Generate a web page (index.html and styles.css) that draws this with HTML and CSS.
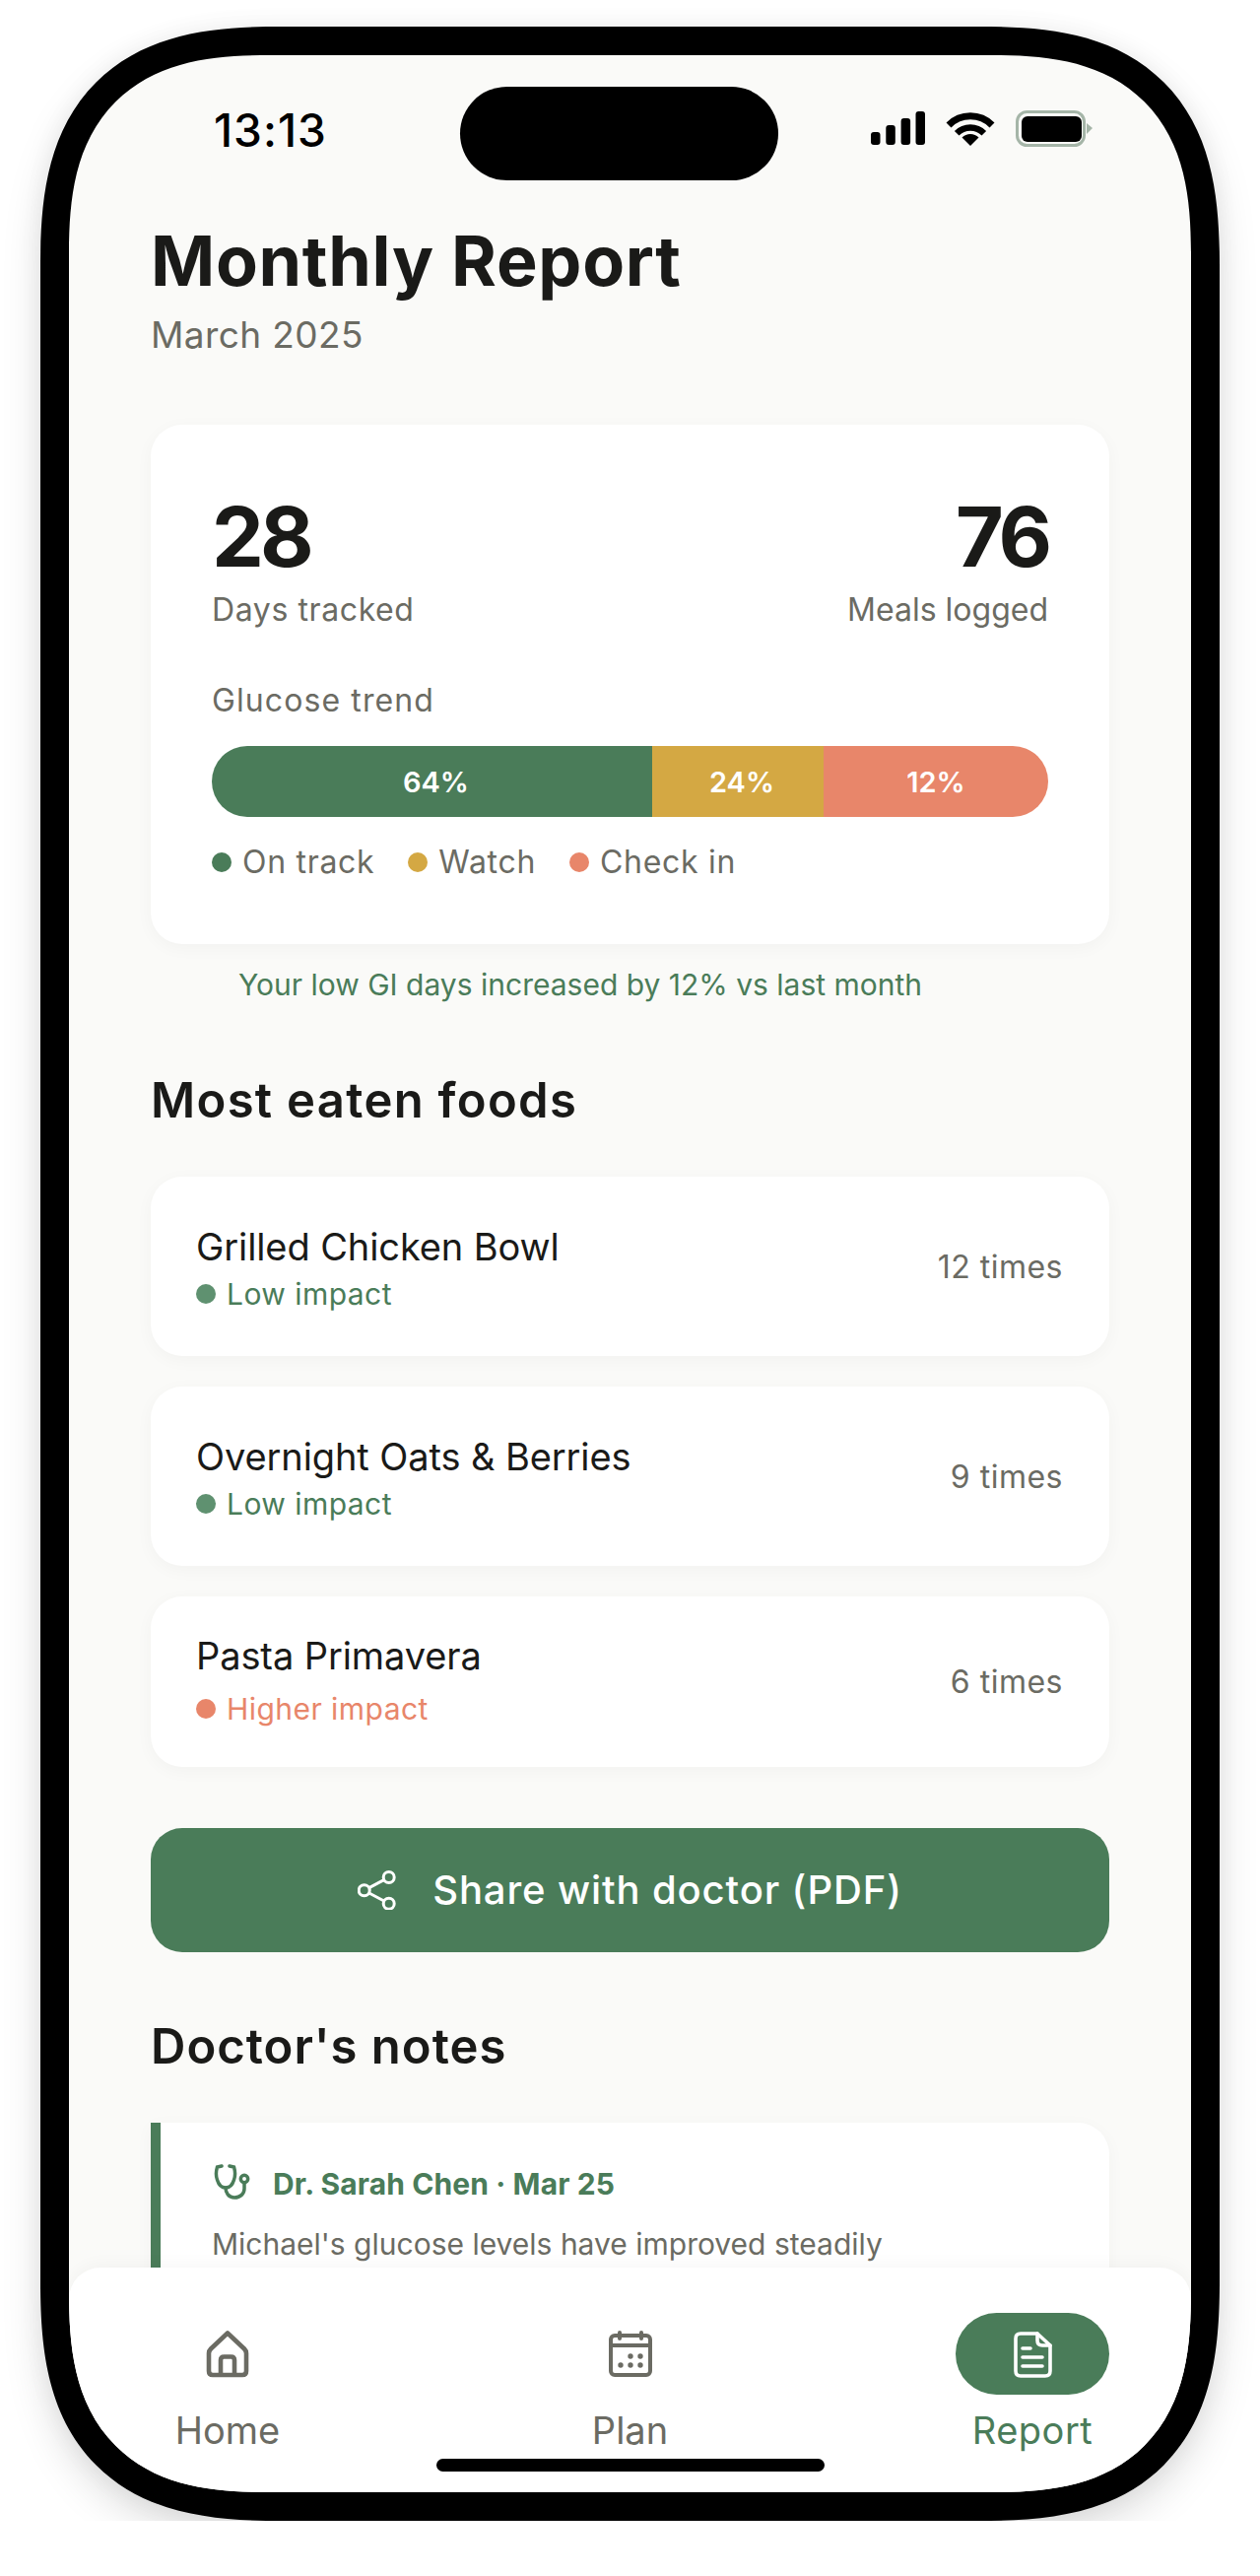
FILE: index.html
```html
<!DOCTYPE html>
<html lang="en">
<head>
  <meta charset="UTF-8" />
  <meta name="viewport" content="width=device-width, initial-scale=1.0"/>
  <title>Monthly Report</title>
  <link rel="stylesheet" href="styles.css">
</head>
<body>
  <div class="phone">
    <div class="screen">
      <div class="island"></div>

      <div class="status">
        <span class="clock">13:13</span>
        <div class="status-icons">
          <svg width="55" height="37" viewBox="0 0 55 37">
            <rect x="0" y="22" width="9.5" height="13" rx="3"/>
            <rect x="15.3" y="15" width="9.5" height="20" rx="3"/>
            <rect x="30.6" y="8" width="9.5" height="27" rx="3"/>
            <rect x="45.5" y="1" width="9.5" height="34" rx="3"/>
          </svg>
          <svg width="50" height="37" viewBox="0 0 50 37">
            <path d="M3 15 A31 31 0 0 1 47 15" fill="none" stroke="#000" stroke-width="7"/>
            <path d="M11.2 23.2 A19.5 19.5 0 0 1 38.8 23.2" fill="none" stroke="#000" stroke-width="6.5"/>
            <path d="M25 36 L16.5 27.5 A12 12 0 0 1 33.5 27.5 Z"/>
          </svg>
          <svg width="78" height="37" viewBox="0 0 78 37">
            <rect x="1.5" y="1.5" width="68" height="34" rx="10" fill="none" stroke="#a5b5a8" stroke-width="3"/>
            <rect x="6" y="6" width="61" height="26" rx="6"/>
            <path d="M72 13 L78 18 L72 24 Z" fill="#a5b5a8"/>
          </svg>
        </div>
      </div>

      <div class="content">
        <h1>Monthly Report</h1>
        <p class="subtitle">March 2025</p>

        <div class="card summary">
          <div class="stats">
            <div>
              <div class="stat-num">28</div>
              <div class="stat-label">Days tracked</div>
            </div>
            <div class="stat-right">
              <div class="stat-num">76</div>
              <div class="stat-label">Meals logged</div>
            </div>
          </div>
          <div class="trend-label">Glucose trend</div>
          <div class="trend-bar">
            <div class="seg seg-good">64%</div>
            <div class="seg seg-watch">24%</div>
            <div class="seg seg-check">12%</div>
          </div>
          <div class="legend">
            <span class="legend-item"><i class="dot bg-good"></i>On track</span>
            <span class="legend-item"><i class="dot bg-watch"></i>Watch</span>
            <span class="legend-item"><i class="dot bg-check"></i>Check in</span>
          </div>
        </div>
        <p class="insight">Your low GI days increased by 12% vs last month</p>

        <h2 class="foods-title">Most eaten foods</h2>
        <div class="card food">
          <div>
            <div class="food-name">Grilled Chicken Bowl</div>
            <div class="impact low"><i class="dot"></i>Low impact</div>
          </div>
          <span class="times">12 times</span>
        </div>
        <div class="card food">
          <div>
            <div class="food-name">Overnight Oats &amp; Berries</div>
            <div class="impact low"><i class="dot"></i>Low impact</div>
          </div>
          <span class="times">9 times</span>
        </div>
        <div class="card food food-short">
          <div>
            <div class="food-name">Pasta Primavera</div>
            <div class="impact high"><i class="dot"></i>Higher impact</div>
          </div>
          <span class="times">6 times</span>
        </div>

        <button class="share-btn">
          <svg width="40" height="40" viewBox="10 13 40 40" fill="none" stroke="#fff" stroke-width="3">
            <circle cx="41.7" cy="20" r="5.5"/>
            <circle cx="16.7" cy="33.3" r="5.5"/>
            <circle cx="41.7" cy="46.7" r="5.5"/>
            <path d="M21.7 30.6 L36.8 22.6 M21.7 36 L36.8 44"/>
          </svg>
          Share with doctor (PDF)
        </button>

        <h2 class="notes-title">Doctor's notes</h2>
        <div class="card note">
          <div class="note-head">
            <svg width="40" height="40" viewBox="10 13 40 40" fill="none" stroke="#4a7c59" stroke-width="3.5" stroke-linecap="round">
              <path d="M20 15 L15.5 16 C14 21 14 25 15.5 29 C17 34 20 37 24 37 C28 37 31 34 32.5 29 C34 25 34 21 32.5 16 L28 15"/>
              <path d="M24 37 C24 42 27 47 33 47 C39 47 43 43 43 38 L43 32"/>
              <circle cx="43" cy="28" r="3.7"/>
            </svg>
            <span class="note-author">Dr. Sarah Chen · Mar 25</span>
          </div>
          <p class="note-text">Michael's glucose levels have improved steadily</p>
        </div>
      </div>

      <!-- bottom tabs sit over the scrolled content -->
      <nav class="tabs">
        <div class="tab">
          <div class="tab-icon">
            <svg width="48" height="50" viewBox="0 0 48 50" fill="none" stroke="#6b6b63" stroke-width="4.6" stroke-linejoin="round">
              <path d="M24 3.5 L7 19.5 Q5 21.5 5 24 V42 Q5 46 9 46 H39 Q43 46 43 42 V24 Q43 21.5 41 19.5 Z"/>
              <path d="M17 46 V31 Q17 27.5 20.5 27.5 H27.5 Q31 27.5 31 31 V46"/>
            </svg>
          </div>
          <span class="tab-label">Home</span>
        </div>
        <div class="tab">
          <div class="tab-icon">
            <svg width="48" height="50" viewBox="0 0 48 50" fill="none" stroke="#6b6b63" stroke-width="4" stroke-linecap="round">
              <rect x="4" y="6" width="40" height="40" rx="4"/>
              <path d="M4 16 H44 M13 3 V9 M35 3 V9"/>
              <g fill="#6b6b63" stroke="none">
                <circle cx="24" cy="27" r="2.7"/>
                <circle cx="34" cy="27" r="2.7"/>
                <circle cx="14" cy="36" r="2.7"/>
                <circle cx="24" cy="36" r="2.7"/>
                <circle cx="34" cy="36" r="2.7"/>
              </g>
            </svg>
          </div>
          <span class="tab-label">Plan</span>
        </div>
        <div class="tab tab-active">
          <div class="tab-icon">
            <svg width="48" height="50" viewBox="0 0 48 50" fill="none" stroke="#fff" stroke-width="3.6" stroke-linecap="round" stroke-linejoin="round">
              <path d="M29 4 H12 Q7 4 7 9 V42 Q7 47 12 47 H37 Q42 47 42 42 V16 Z"/>
              <path d="M29 4 V11 Q29 16 34 16 H42"/>
              <path d="M14 19 H22 M14 28 H34 M14 37 H34"/>
            </svg>
          </div>
          <span class="tab-label">Report</span>
        </div>
      </nav>
      <div class="home-bar"></div>
    </div>
  </div>
</body>
</html>
```

FILE: styles.css
```css
* {
  box-sizing: border-box;
}

body {
  margin: 0;
  background-color: #fff;
  font-family: Inter, "Noto Sans", sans-serif;
  color: #1a1a18;
}

.phone {
  width: 1197px;
  height: 2531px;
  margin: 27px 0 0 41px;
  border: 29px solid #000;
  border-radius: 190px;
  background-color: #000;
  box-shadow: 0 18px 40px rgba(0, 0, 0, 0.13), 0 0 24px rgba(0, 0, 0, 0.05);
}

.screen {
  position: relative;
  height: 100%;
  overflow: hidden;
  border-radius: 161px;
  background-color: #fafaf8;
}

/* the real device corners are squircles, not circles */
@supports (corner-shape: squircle) {
  .phone {
    border-radius: 245px;
    corner-shape: superellipse(1.4);
  }

  .screen {
    border-radius: 205px;
    corner-shape: superellipse(1.4);
  }
}

.island {
  position: absolute;
  top: 32px;
  left: 397px;
  width: 323px;
  height: 95px;
  border-radius: 48px;
  background-color: #000;
}

.status {
  display: flex;
  justify-content: space-between;
  height: 167px;
  padding: 58px 100px 0 147px;
}

.clock {
  font-size: 46px;
  line-height: 37px;
  font-weight: 500;
  letter-spacing: 1px;
  color: #000;
}

.status-icons {
  display: flex;
  gap: 21px;
  height: 37px;
  margin-top: -2px;
}

.content {
  padding: 0 83px;
}

h1 {
  margin: 0;
  font-size: 70px;
  line-height: 84px;
  font-weight: 700;
  letter-spacing: 0.7px;
}

.subtitle {
  margin: 11px 0 69px;
  font-size: 37px;
  line-height: 44px;
  letter-spacing: 0.4px;
  color: #6b6b63;
}

.card {
  background-color: #fff;
  border-radius: 32px;
  box-shadow: 0 4px 18px rgba(0, 0, 0, 0.035);
}

.summary {
  padding: 64px 62px 64px 62px;
}

.stats {
  display: flex;
  justify-content: space-between;
}

.stat-right {
  text-align: right;
}

.stat-num {
  font-size: 84px;
  line-height: 100px;
  font-weight: 700;
  letter-spacing: -4px;
}

.stat-label {
  margin-top: 5px;
  font-size: 32px;
  line-height: 38px;
  letter-spacing: 0.6px;
  color: #6b6b63;
}

.stat-right .stat-label {
  letter-spacing: 0;
}

.trend-label {
  margin-top: 54px;
  font-size: 32px;
  line-height: 38px;
  letter-spacing: 1.1px;
  color: #6b6b63;
}

.trend-bar {
  display: flex;
  height: 72px;
  margin-top: 27px;
  border-radius: 36px;
  overflow: hidden;
}

.seg {
  display: flex;
  align-items: center;
  justify-content: center;
  color: #fff;
  font-size: 29px;
  font-weight: 600;
}

.seg-good { width: 447px; padding-left: 8px; background-color: #4a7c59; }
.seg-watch { width: 174px; padding-left: 8px; background-color: #d4a843; }
.seg-check { width: 228px; background-color: #e8866a; }

.bg-good { background-color: #4a7c59; }
.bg-watch { background-color: #d4a843; }
.bg-check { background-color: #e8866a; }

.legend {
  display: flex;
  gap: 34px;
  margin-top: 27px;
  font-size: 32px;
  line-height: 38px;
  letter-spacing: 0.7px;
  color: #6b6b63;
}

.legend-item {
  display: flex;
  align-items: center;
}

.dot {
  display: block;
  flex: none;
  width: 20px;
  height: 20px;
  margin-right: 11px;
  border-radius: 50%;
}

.insight {
  margin: 23px 0 0 89px;
  font-size: 30px;
  line-height: 36px;
  color: #4a7c59;
}

h2 {
  margin: 0 0 48px;
  font-size: 49px;
  line-height: 58px;
  font-weight: 600;
  letter-spacing: 1.1px;
}

.foods-title {
  margin-top: 71px;
  letter-spacing: 1.3px;
}

.notes-title {
  margin-top: 67px;
  letter-spacing: 1px;
}

.food {
  display: flex;
  align-items: center;
  justify-content: space-between;
  height: 182px;
  margin-bottom: 31px;
  padding: 3px 47px 0 46px;
}

.food-short {
  height: 173px;
  margin-bottom: 0;
  padding-top: 0;
  padding-bottom: 5px;
}

.food-short .times {
  margin-top: 5px;
}

.food-name {
  font-size: 38px;
  line-height: 46px;
  letter-spacing: -0.1px;
}

.impact {
  display: flex;
  align-items: center;
  margin-top: 7px;
  font-size: 30px;
  line-height: 36px;
  letter-spacing: 0.45px;
}

.food-short .impact {
  margin-top: 13px;
}

.impact.low { color: #4a7c59; }
.impact.low .dot { background-color: #5f9170; }
.impact.high { color: #e8866a; }
.impact.high .dot { background-color: #e8866a; }

.times {
  margin-top: -3px;
  font-size: 32px;
  letter-spacing: 0.5px;
  color: #6b6b63;
}

.share-btn {
  display: flex;
  align-items: center;
  justify-content: center;
  gap: 36px;
  width: 100%;
  height: 126px;
  margin-top: 62px;
  padding-bottom: 2px;
  border: none;
  border-radius: 32px;
  background-color: #4a7c59;
  color: #fff;
  font-family: inherit;
  font-size: 40px;
  font-weight: 500;
  letter-spacing: 0.88px;
}

.note {
  height: 300px;
  padding: 40px 52px 0;
  border-left: 10px solid #4a7c59;
  border-radius: 0 32px 32px 0;
}

.note-head {
  display: flex;
  align-items: center;
  gap: 22px;
  height: 44px;
}

.note-author {
  font-size: 30px;
  font-weight: 700;
  letter-spacing: 0.1px;
  color: #4a7c59;
}

.note-text {
  margin: 21px 0 0;
  font-size: 30px;
  line-height: 36px;
  color: #6b6b63;
}

.tabs {
  position: absolute;
  left: 0;
  right: 0;
  bottom: 0;
  display: flex;
  justify-content: space-between;
  height: 228px;
  padding: 46px 83px 0;
  border-radius: 32px 32px 0 0;
  background-color: #fff;
  box-shadow: 0 -4px 16px rgba(0, 0, 0, 0.03);
}

.tab {
  display: flex;
  flex-direction: column;
  align-items: center;
  width: 156px;
}

.tab-icon {
  display: flex;
  align-items: center;
  justify-content: center;
  width: 156px;
  height: 83px;
  border-radius: 42px;
}

.tab-label {
  margin-top: 14px;
  font-size: 38px;
  line-height: 44px;
  color: #6b6b63;
}

.tab-active .tab-icon {
  background-color: #4a7c59;
}

.tab-active .tab-label {
  letter-spacing: 0.5px;
  color: #4a7c59;
}

.home-bar {
  position: absolute;
  left: 373px;
  bottom: 21px;
  width: 394px;
  height: 13px;
  border-radius: 7px;
  background-color: #000;
}
```
